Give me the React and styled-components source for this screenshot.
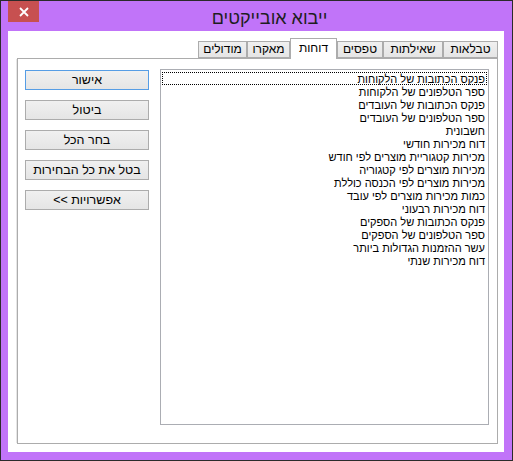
import React, { useState } from 'react';
import styled, { createGlobalStyle } from 'styled-components';

const GlobalStyle = createGlobalStyle`
  html, body {
    margin: 0;
    padding: 0;
    background: #fff;
  }
  body {
    font-family: "Liberation Sans", "DejaVu Sans", sans-serif;
  }
`;

const Window = styled.div`
  box-sizing: border-box;
  width: 513px;
  height: 461px;
  border: 1px solid #2b2b2b;
  background: #c174f9;
  display: flex;
  flex-direction: column;
`;

const TitleBar = styled.div`
  height: 30px;
  display: flex;
  align-items: flex-start;
  padding: 0 8px 0 7px;
`;

const CloseButton = styled.div`
  width: 31px;
  height: 21px;
  background: #c75050;
  display: flex;
  align-items: center;
  justify-content: center;
`;

const Title = styled.div`
  flex: 1;
  text-align: center;
  direction: rtl;
  font-size: 18px;
  line-height: 20px;
  padding: 7px 4px 0 0;
  color: #1e1e1e;
`;

const Client = styled.div`
  flex: 1;
  margin: 0 8px 8px 7px;
  padding: 6px 6px 8px 9px;
  background: #fff;
  display: flex;
  flex-direction: column;
`;

const TabStrip = styled.div`
  height: 21px;
  display: flex;
  direction: rtl;
  align-items: flex-end;
`;

const Tab = styled.div`
  box-sizing: border-box;
  position: relative;
  width: ${(p) => p.$w}px;
  height: ${(p) => (p.$active ? '21px' : '17px')};
  margin-bottom: ${(p) => (p.$active ? '-1px' : '0')};
  padding-top: ${(p) => (p.$active ? '2px' : '0')};
  border: 1px solid #acacac;
  border-bottom: ${(p) => (p.$active ? 'none' : '1px solid #acacac')};
  background: ${(p) => (p.$active ? '#fff' : 'linear-gradient(#f0f0f0, #e5e5e5)')};
  z-index: ${(p) => (p.$active ? 1 : 0)};
  text-align: center;
  font-size: 12px;
  line-height: 15px;
  color: #000;
  white-space: nowrap;
`;

const Panel = styled.div`
  flex: 1;
  border: 1px solid #acacac;
  box-shadow: -2px 0 0 -1px #e6e6e6;
  background: #fff;
  display: flex;
  direction: rtl;
  gap: 11px;
  padding: 10px 8px 18px 7px;
`;

const ListBox = styled.div`
  flex: 1;
  border: 1px solid #abadb3;
  padding: 2px 1px 1px;
  overflow: hidden;
`;

const ListItem = styled.div`
  font-size: 11px;
  line-height: 11px;
  padding: 2px 2px 0;
  color: #000;
  white-space: nowrap;
  outline: ${(p) => (p.$focused ? '1px dotted #000' : 'none')};
  outline-offset: -1px;
`;

const ButtonColumn = styled.div`
  width: 124px;
  display: flex;
  flex-direction: column;
  gap: 10px;
  padding-top: 1px;
`;

const Button = styled.button`
  box-sizing: border-box;
  height: 20px;
  width: 100%;
  padding: 0;
  direction: rtl;
  border: 1px solid ${(p) => (p.$default ? '#569de5' : '#acacac')};
  background: linear-gradient(#f0f0f0, #e5e5e5);
  font-family: "Liberation Sans", "DejaVu Sans", sans-serif;
  font-size: 12.5px;
  color: #000;
`;

const tabs = [
  { label: 'טבלאות', w: 55 },
  { label: 'שאילתות', w: 60 },
  { label: 'טפסים', w: 46 },
  { label: 'דוחות', w: 47 },
  { label: 'מאקרו', w: 43 },
  { label: 'מודולים', w: 49 },
];

const reports = [
  'פנקס הכתובות של הלקוחות',
  'ספר הטלפונים של הלקוחות',
  'פנקס הכתובות של העובדים',
  'ספר הטלפונים של העובדים',
  'חשבונית',
  'דוח מכירות חודשי',
  'מכירות קטגוריית מוצרים לפי חודש',
  'מכירות מוצרים לפי קטגוריה',
  'מכירות מוצרים לפי הכנסה כוללת',
  'כמות מכירות מוצרים לפי עובד',
  'דוח מכירות רבעוני',
  'פנקס הכתובות של הספקים',
  'ספר הטלפונים של הספקים',
  'עשר ההזמנות הגדולות ביותר',
  'דוח מכירות שנתי',
];

const buttons = ['אישור', 'ביטול', 'בחר הכל', 'בטל את כל הבחירות', 'אפשרויות >>'];

const App = () => {
  const [activeTab, setActiveTab] = useState(3);
  const [focused, setFocused] = useState(0);

  return (
    <Window>
      <GlobalStyle />
      <TitleBar>
        <CloseButton>
          <svg width="10" height="10" viewBox="0 0 10 10">
            <path d="M1 1 L9 9 M9 1 L1 9" stroke="#fff" strokeWidth="1.8" />
          </svg>
        </CloseButton>
        <Title>ייבוא אובייקטים</Title>
      </TitleBar>
      <Client>
        <TabStrip>
          {tabs.map((t, i) => (
            <Tab key={t.label} $w={t.w} $active={i === activeTab} onClick={() => setActiveTab(i)}>
              {t.label}
            </Tab>
          ))}
        </TabStrip>
        <Panel>
          <ListBox>
            {reports.map((r, i) => (
              <ListItem key={r} $focused={i === focused} onClick={() => setFocused(i)}>
                {r}
              </ListItem>
            ))}
          </ListBox>
          <ButtonColumn>
            {buttons.map((b, i) => (
              <Button key={b} $default={i === 0}>
                {b}
              </Button>
            ))}
          </ButtonColumn>
        </Panel>
      </Client>
    </Window>
  );
};

export default App;
